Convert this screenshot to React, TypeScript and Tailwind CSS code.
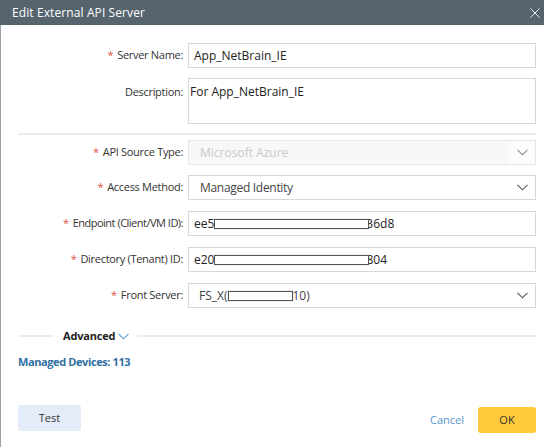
import React from 'react';

const font = { fontFamily: '"Open Sans", "Noto Sans", Arial, sans-serif' };

const Chevron: React.FC<{ className?: string }> = ({ className }) => (
  <svg width="11" height="7" viewBox="0 0 11 7" fill="none" className={className}>
    <path d="M0.5 0.8 L5.5 5.8 L10.5 0.8" stroke="currentColor" strokeWidth="1.1" />
  </svg>
);

const Redact: React.FC<{ w: number; overlap?: boolean }> = ({ w, overlap = true }) => (
  <span
    className={`relative z-10 inline-block h-[10px] bg-white border border-[#555] shadow-[0_0_1px_#999] align-middle ${overlap ? '-mr-[3px]' : ''}`}
    style={{ width: w }}
  />
);

const Label: React.FC<{ text: string; required?: boolean; tight?: boolean }> = ({ text, required, tight }) => (
  <div
    className={`w-[170px] pr-[5px] text-right text-[#333] whitespace-nowrap text-[11px] ${tight ? 'tracking-[-0.5px]' : 'tracking-[-0.3px]'}`}
  >
    {required && <span className="text-[#e0503c] mr-[4px]">*</span>}
    {text}
  </div>
);

const Row: React.FC<{ label: string; required?: boolean; tight?: boolean; children: React.ReactNode; className?: string }> = ({
  label,
  required,
  tight,
  children,
  className,
}) => (
  <div className={`flex items-center ${className ?? ''}`}>
    <Label text={label} required={required} tight={tight} />
    <div className="flex-1">{children}</div>
  </div>
);

const App: React.FC = () => {
  return (
    <div className="w-[544px] h-[447px] bg-white text-[12px] overflow-hidden flex flex-col" style={font}>
      {/* Header */}
      <div className="h-[25px] bg-[#56646e] flex items-center justify-between pl-[12px] pr-[4px] text-white shrink-0">
        <span className="text-[12px] tracking-[0.1px]">Edit External API Server</span>
        <svg width="10" height="10" viewBox="0 0 10 10" className="text-[#e8ecef]">
          <path d="M0.5 0.5 L9.5 9.5 M9.5 0.5 L0.5 9.5" stroke="currentColor" strokeWidth="1" />
        </svg>
      </div>

      <div className="flex-1 flex flex-col border-l border-[#9aa2a8] pl-[17px] pr-[8px]">
        <Row label="Server Name:" required className="mt-[18px]">
          <div className="h-[25px] border border-[#d8d8d8] flex items-center px-[5px] text-[#222]">App_NetBrain_IE</div>
        </Row>

        <div className="flex mt-[10px]">
          <div className="pt-[6px]">
            <Label text="Description:" />
          </div>
          <div className="flex-1 h-[46px] border border-[#d8d8d8] px-[1px] pt-[4px] text-[#222]">For App_NetBrain_IE</div>
        </div>

        <div className="h-[2px] bg-[#ececec] mt-[9px]" />

        <Row label="API Source Type:" required className="mt-[5px]">
          <div className="h-[25px] border border-[#e6e6e6] flex bg-[#f8f8f8]">
            <div className="flex-1 flex items-center px-[11px] text-[#c8c8c8]">Microsoft Azure</div>
            <div className="w-[26px] flex items-center justify-center bg-[#fcfcfc] text-[#8a8a8a]">
              <Chevron />
            </div>
          </div>
        </Row>

        <Row label="Access Method:" required className="mt-[10px]">
          <div className="h-[25px] border border-[#d8d8d8] flex items-center justify-between pl-[11px] pr-[7px] text-[#444]">
            <span className="tracking-[-0.3px]">Managed Identity</span>
            <Chevron className="text-[#555]" />
          </div>
        </Row>

        <Row label="Endpoint (Client/VM ID):" required tight className="mt-[11px]">
          <div className="h-[25px] border border-[#d8d8d8] flex items-center px-[5px] text-[#222]">
            <span>ee5</span>
            <Redact w={155} />
            <span>36d8</span>
          </div>
        </Row>

        <Row label="Directory (Tenant) ID:" required className="mt-[11px]">
          <div className="h-[25px] border border-[#d8d8d8] flex items-center px-[5px] text-[#222]">
            <span>e20</span>
            <Redact w={155} />
            <span>804</span>
          </div>
        </Row>

        <Row label="Front Server:" required className="mt-[11px]">
          <div className="h-[25px] border border-[#d8d8d8] flex items-center justify-between pl-[10px] pr-[7px] text-[#444]">
            <span className="flex items-center">
              <span>FS_X(</span>
              <Redact w={65} overlap={false} />
              <span>10)</span>
            </span>
            <Chevron className="text-[#555]" />
          </div>
        </Row>

        {/* Advanced */}
        <div className="flex items-center mt-[20px]">
          <div className="w-[36px] h-[2px] bg-[#ececec]" />
          <span className="ml-[9px] font-bold text-[#222] text-[11px] tracking-[-0.2px]">Advanced</span>
          <Chevron className="ml-[3px] text-[#5b9bd5]" />
          <div className="flex-1 h-[2px] bg-[#ececec] ml-[8px]" />
        </div>

        <div className="mt-[9px] font-bold text-[#2f6fa3] text-[11px] tracking-[-0.4px]">Managed Devices: 113</div>

        <div className="mt-auto mb-[14px] flex items-end justify-between">
          <button className="w-[63px] h-[26px] rounded-[3px] bg-[#e3ecf8] text-[#333] text-[11px] mb-[2px]">Test</button>
          <div className="flex items-center">
            <button className="text-[#5b97cf] text-[11px] mr-[14px]">Cancel</button>
            <button className="w-[58px] h-[26px] rounded-[3px] bg-[#ffcb3c] text-[#333] text-[11px]">OK</button>
          </div>
        </div>
      </div>
    </div>
  );
};

export default App;
